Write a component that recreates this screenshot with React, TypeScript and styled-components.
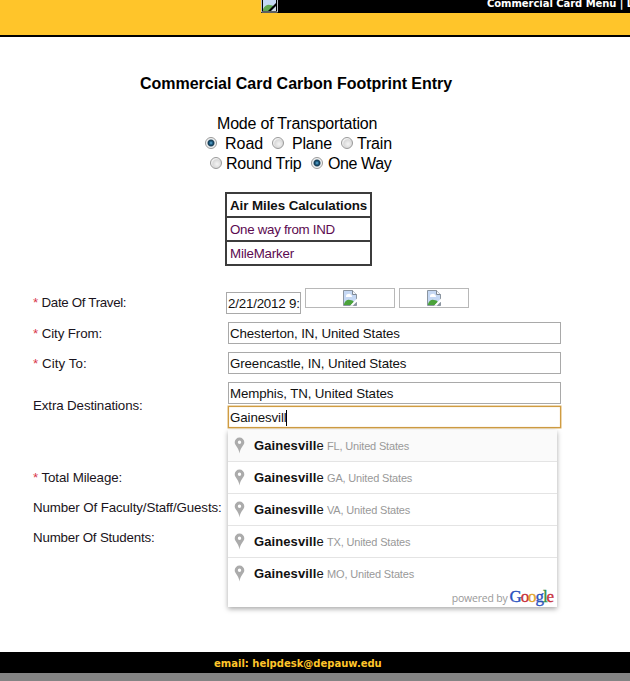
import React from 'react';
import styled, { createGlobalStyle } from 'styled-components';

const GlobalStyle = createGlobalStyle`
  *, *::before, *::after { box-sizing: border-box; }
  body {
    margin: 0;
    background: #fff;
    color: #000;
    font-family: "Liberation Sans", Arial, sans-serif;
    overflow: hidden;
  }
`;

const Page = styled.div`
  width: 630px;
  height: 681px;
  display: flex;
  flex-direction: column;
  overflow: hidden;
`;

const Header = styled.header`
  height: 37px;
  flex: none;
  display: flex;
  align-items: flex-start;
  padding-left: 261px;
  background: #ffc52a;
  border-bottom: 2px solid #000;
`;

const LogoSlot = styled.div`
  width: 17px;
  height: 13px;
  flex: none;
  display: flex;
  overflow: hidden;
  background: #000;
`;

const MenuBar = styled.nav`
  flex: 1;
  height: 13px;
  padding-left: 209px;
  overflow: hidden;
  background: #000;
  color: #fff;
  font: bold 10px/14px "DejaVu Sans", Verdana, sans-serif;
  letter-spacing: -0.05px;
  white-space: nowrap;

  & > span { display: block; margin-top: -3px; }
`;

const Title = styled.h1`
  margin: 37px 0 0 140px;
  height: 20px;
  font-size: 16px;
  line-height: 20px;
  letter-spacing: -0.02px;
  white-space: nowrap;
`;

const ModeGroup = styled.section`
  height: 60px;
  margin-top: 20px;
  font-size: 16px;
  line-height: 20px;
`;

const ModeCaption = styled.div`
  margin-left: 217px;
  height: 20px;
  letter-spacing: -0.2px;
`;

const RadioRow = styled.div<{ $left: number }>`
  display: flex;
  align-items: center;
  height: 20px;
  padding-left: ${(p) => p.$left}px;
  white-space: nowrap;
`;

const RadioLabel = styled.label<{ $gap: number; $width: number; $track?: number }>`
  display: flex;
  align-items: center;
  gap: ${(p) => p.$gap}px;
  width: ${(p) => p.$width}px;
  flex: none;
  letter-spacing: ${(p) => p.$track ?? 0}px;
`;

const RadioDot = styled.span<{ $on?: boolean }>`
  width: 12px;
  height: 12px;
  flex: none;
  margin-top: -2px;
  border: 1px solid #999;
  border-radius: 50%;
  background: ${(p) =>
    p.$on
      ? 'radial-gradient(circle at 50% 50%, #6db6d8 0, #24668f 20%, #12384f 40%, #c6d0d6 54%, #f4f4f4 62%)'
      : 'radial-gradient(circle at 60% 60%, #f4f4f4 0, #d9d9d9 50%, #f2f2f2 65%)'};
`;

const MilesTable = styled.table`
  width: 147px;
  margin: 18px 0 0 225px;
  border: 2px solid #3c3c3c;
  border-collapse: collapse;
  font-size: 13.33px;
  line-height: 16px;
`;

const MilesCell = styled.td<{ $head?: boolean; $track: number }>`
  height: 24px;
  padding: 1px 2px 0 3px;
  border: 2px solid #3c3c3c;
  font-weight: ${(p) => (p.$head ? 'bold' : 'normal')};
  color: ${(p) => (p.$head ? '#111' : '#5c0a50')};
  letter-spacing: ${(p) => p.$track}px;
  white-space: nowrap;
`;

const Form = styled.form`
  margin-top: 22px;
  padding-left: 33px;
  font-size: 13.33px;
`;

const Row = styled.div<{ $height: number; $top?: number }>`
  display: grid;
  grid-template-columns: 193px 1fr;
  align-items: center;
  height: ${(p) => p.$height}px;
  margin-top: ${(p) => p.$top ?? 0}px;
`;

const Label = styled.label<{ $track?: number }>`
  padding-top: 2px;
  line-height: 16px;
  color: #1a1420;
  letter-spacing: ${(p) => p.$track ?? -0.12}px;
  white-space: nowrap;
`;

const DateLabel = styled(Label)`
  padding-top: 0;
`;

const Required = styled.span`
  color: #d8344a;
  letter-spacing: 0;
`;

const DateFields = styled.div`
  display: flex;
  align-items: flex-start;
  height: 30px;
`;

const Field = styled.div<{ $width: number; $focus?: boolean }>`
  width: ${(p) => p.$width}px;
  height: 22px;
  display: flex;
  align-items: center;
  padding: 1px 1px 0;
  overflow: hidden;
  border: 1px solid #a9a9a9;
  ${(p) => p.$focus && 'border-color: #cf9c42; box-shadow: 0 0 0 0.5px #dcb062, inset 0 0 1px #dcb062;'}
  background: #fff;
  color: #111;
  line-height: 18px;
  letter-spacing: -0.12px;
  white-space: nowrap;
`;

const DateField = styled(Field)`
  margin-top: 4px;
  letter-spacing: -0.2px;
`;

const Stack = styled.div`
  display: flex;
  flex-direction: column;
  gap: 2px;
  padding-left: 2px;
`;

const MissingImage = styled.div<{ $width: number }>`
  display: flex;
  align-items: center;
  justify-content: center;
  width: ${(p) => p.$width}px;
  height: 20px;
  margin-left: 4px;
  flex: none;
  border: 1px solid #b8b8b8;
`;

const Caret = styled.span`
  width: 1px;
  height: 16px;
  margin-left: -1px;
  background: #000;
`;

const Anchor = styled.div`
  position: relative;
`;

const Suggestions = styled.div`
  position: absolute;
  top: 24px;
  left: 0;
  width: 329px;
  height: 177px;
  background: #fff;
  box-shadow: 0 2px 5px rgba(0, 0, 0, 0.34);
`;

const Suggestion = styled.div<{ $active?: boolean; $first?: boolean }>`
  display: flex;
  align-items: center;
  height: 32px;
  padding: 0 0 1px 5px;
  border-top: ${(p) => (p.$first ? 'none' : '1px solid #e4e4e4')};
  ${(p) => p.$first && 'height: 31px;'}
  background: ${(p) => (p.$active ? '#fafafa' : '#fff')};
  white-space: nowrap;
`;

const City = styled.span`
  margin-left: 9px;
  width: 73px;
  font-size: 13px;
  color: #111;

  b { letter-spacing: 0.1px; }
`;

const Region = styled.span`
  font-size: 11px;
  padding-top: 1px;
  letter-spacing: -0.17px;
  color: #999;
`;

const Powered = styled.div`
  display: flex;
  align-items: baseline;
  justify-content: flex-end;
  gap: 2px;
  height: 18px;
  margin-top: -2px;
  padding-right: 4px;
  line-height: 20px;
  font-family: "Open Sans", sans-serif;
  font-size: 10.5px;
  letter-spacing: -0.2px;
  color: #999;
`;

const Google = styled.span`
  font-family: "Liberation Serif", serif;
  font-size: 17px;
  letter-spacing: -1.1px;
`;

const GoogleLetter = styled.span<{ $color: string }>`
  color: ${(p) => p.$color};
  -webkit-text-stroke: 0.35px ${(p) => p.$color};
`;

const Footer = styled.footer`
  height: 29px;
  flex: none;
  margin-top: auto;
  padding-left: 214px;
  border-bottom: 8px solid #848484;
  background: #000;
  color: #ffc52a;
  font: bold 10px/23px "DejaVu Sans", Verdana, sans-serif;
  white-space: nowrap;
`;

const BrokenIcon = () => (
  <svg width="14" height="16" viewBox="0 0 14 16">
    <path d="M.5.5h9l4 4v11H.5z" fill="#c5d8f4" stroke="#8b95a0" />
    <path d="M3 6q0-2 2-2 2-1 3 1 1 0 1 2H3z" fill="#fff" />
    <path d="M1 14q2-5 6-4 3 0 4 2l-3 3H1z" fill="#4ba33b" />
    <path d="M9.5.5v4h4" fill="#f4f6fa" stroke="#7f8994" />
    <path d="M14 8.5 7 15.7h3l4-3.9z" fill="#fff" />
    <path d="M10 15.5h3.5V12z" fill="#8b95a0" />
  </svg>
);

const HeaderBrokenIcon = () => (
  <svg width="17" height="13" viewBox="0 0 17 13">
    <path d="M.5-1v13h16V-1" fill="none" stroke="#b8bec2" />
    <path d="M2 0h13v11H2z" fill="#c5d8f4" />
    <path d="M2 9q3-5 7-4 3 0 4 2l-4 4H2z" fill="#61a852" />
    <path d="M15 3 7 11h3l5-5z" fill="#000" />
    <path d="M11 11h4V7z" fill="#d5dde2" />
  </svg>
);

const PinIcon = () => (
  <svg width="12" height="17" viewBox="0 0 12 17">
    <path
      d="M6.5 .5A4.8 4.8 0 0 0 1.7 5.3C1.7 8.7 5.6 10 6.5 16.4 7.4 10 11.3 8.7 11.3 5.3A4.8 4.8 0 0 0 6.5 .5Zm0 3.1a1.7 1.7 0 1 1 0 3.4 1.7 1.7 0 0 1 0-3.4Z"
      fill="#ababab"
      fillRule="evenodd"
    />
  </svg>
);

const states = ['FL', 'GA', 'VA', 'TX', 'MO'];

const googleLetters: [string, string][] = [
  ['G', '#2a52be'],
  ['o', '#c8323c'],
  ['o', '#e3a52c'],
  ['g', '#2a52be'],
  ['l', '#2f9145'],
  ['e', '#c8323c'],
];

export default function App() {
  return (
    <Page>
      <GlobalStyle />
      <Header>
        <LogoSlot><HeaderBrokenIcon /></LogoSlot>
        <MenuBar><span>Commercial Card Menu | L</span></MenuBar>
      </Header>

      <Title>Commercial Card Carbon Footprint Entry</Title>

      <ModeGroup>
        <ModeCaption>Mode of Transportation</ModeCaption>
        <RadioRow $left={205}>
          <RadioLabel $gap={8} $width={67}><RadioDot $on />Road</RadioLabel>
          <RadioLabel $gap={8} $width={69} $track={-0.2}><RadioDot />Plane</RadioLabel>
          <RadioLabel $gap={4} $width={60} $track={-0.2}><RadioDot />Train</RadioLabel>
        </RadioRow>
        <RadioRow $left={210}>
          <RadioLabel $gap={4} $width={101} $track={-0.28}><RadioDot />Round Trip</RadioLabel>
          <RadioLabel $gap={5} $width={90} $track={-0.4}><RadioDot $on />One Way</RadioLabel>
        </RadioRow>
      </ModeGroup>

      <MilesTable>
        <tbody>
          <tr><MilesCell $head $track={-0.06}>Air Miles Calculations</MilesCell></tr>
          <tr><MilesCell $track={-0.3}>One way from IND</MilesCell></tr>
          <tr><MilesCell $track={-0.2}>MileMarker</MilesCell></tr>
        </tbody>
      </MilesTable>

      <Form>
        <Row $height={30}>
          <DateLabel $track={-0.33}><Required>*</Required> Date Of Travel:</DateLabel>
          <DateFields>
            <DateField $width={75}>2/21/2012 9:</DateField>
            <MissingImage $width={90}><BrokenIcon /></MissingImage>
            <MissingImage $width={70}><BrokenIcon /></MissingImage>
          </DateFields>
        </Row>
        <Row $height={30}>
          <Label><Required>*</Required> City From:</Label>
          <Stack><Field $width={333}>Chesterton, IN, United States</Field></Stack>
        </Row>
        <Row $height={30}>
          <Label $track={0.08}><Required>*</Required> City To:</Label>
          <Stack><Field $width={333}>Greencastle, IN, United States</Field></Stack>
        </Row>
        <Row $height={54}>
          <Label>Extra Destinations:</Label>
          <Stack>
            <Field $width={333}>Memphis, TN, United States</Field>
            <Anchor>
              <Field $width={333} $focus>Gainesvill<Caret /></Field>
              <Suggestions>
                {states.map((state, i) => (
                  <Suggestion key={state} $active={i === 0} $first={i === 0}>
                    <PinIcon />
                    <City><b>Gainesvill</b>e</City>
                    <Region>{state}, United States</Region>
                  </Suggestion>
                ))}
                <Powered>
                  powered by
                  <Google>
                    {googleLetters.map(([letter, color], i) => (
                      <GoogleLetter key={i} $color={color}>{letter}</GoogleLetter>
                    ))}
                  </Google>
                </Powered>
              </Suggestions>
            </Anchor>
          </Stack>
        </Row>
        <Row $height={30} $top={30}>
          <Label><Required>*</Required> Total Mileage:</Label>
        </Row>
        <Row $height={30}>
          <Label>Number Of Faculty/Staff/Guests:</Label>
        </Row>
        <Row $height={30}>
          <Label $track={-0.2}>Number Of Students:</Label>
        </Row>
      </Form>

      <Footer>email: helpdesk@depauw.edu</Footer>
    </Page>
  );
}
